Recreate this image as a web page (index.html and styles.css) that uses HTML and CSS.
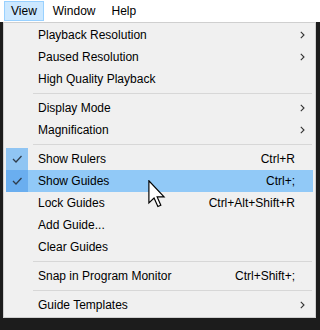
FILE: index.html
```html
<!DOCTYPE html>
<html>
<head>
<meta charset="utf-8">
<link rel="stylesheet" href="styles.css">
</head>
<body>
<div class="menubar">
  <div class="mb-item active">View</div>
  <div class="mb-item">Window</div>
  <div class="mb-item">Help</div>
</div>
<div class="popup">
  <div class="row"><span class="chk"></span><span class="label">Playback Resolution</span><span class="sc"></span><span class="arr"><svg width="5" height="8" viewBox="0 0 5 8"><polyline points="0.8,0.8 4,4 0.8,7.2" fill="none" stroke="#333" stroke-width="1.1"/></svg></span></div>
  <div class="row"><span class="chk"></span><span class="label">Paused Resolution</span><span class="sc"></span><span class="arr"><svg width="5" height="8" viewBox="0 0 5 8"><polyline points="0.8,0.8 4,4 0.8,7.2" fill="none" stroke="#333" stroke-width="1.1"/></svg></span></div>
  <div class="row"><span class="chk"></span><span class="label">High Quality Playback</span><span class="sc"></span><span class="arr"></span></div>
  <div class="sep"></div>
  <div class="row"><span class="chk"></span><span class="label">Display Mode</span><span class="sc"></span><span class="arr"><svg width="5" height="8" viewBox="0 0 5 8"><polyline points="0.8,0.8 4,4 0.8,7.2" fill="none" stroke="#333" stroke-width="1.1"/></svg></span></div>
  <div class="row"><span class="chk"></span><span class="label">Magnification</span><span class="sc"></span><span class="arr"><svg width="5" height="8" viewBox="0 0 5 8"><polyline points="0.8,0.8 4,4 0.8,7.2" fill="none" stroke="#333" stroke-width="1.1"/></svg></span></div>
  <div class="sep"></div>
  <div class="row"><span class="chk on"><svg width="22" height="22" viewBox="0 0 22 22"><polyline points="7,11 10,14 15.5,8" fill="none" stroke="#2f3d4c" stroke-width="1.3"/></svg></span><span class="label">Show Rulers</span><span class="sc">Ctrl+R</span><span class="arr"></span></div>
  <div class="row hover"><span class="chk on"><svg width="22" height="22" viewBox="0 0 22 22"><polyline points="7,11 10,14 15.5,8" fill="none" stroke="#2f3d4c" stroke-width="1.3"/></svg></span><span class="label">Show Guides</span><span class="sc">Ctrl+;</span><span class="arr"></span></div>
  <div class="row"><span class="chk"></span><span class="label">Lock Guides</span><span class="sc">Ctrl+Alt+Shift+R</span><span class="arr"></span></div>
  <div class="row"><span class="chk"></span><span class="label">Add Guide...</span><span class="sc"></span><span class="arr"></span></div>
  <div class="row"><span class="chk"></span><span class="label">Clear Guides</span><span class="sc"></span><span class="arr"></span></div>
  <div class="sep"></div>
  <div class="row"><span class="chk"></span><span class="label">Snap in Program Monitor</span><span class="sc">Ctrl+Shift+;</span><span class="arr"></span></div>
  <div class="sep"></div>
  <div class="row"><span class="chk"></span><span class="label">Guide Templates</span><span class="sc"></span><span class="arr"><svg width="5" height="8" viewBox="0 0 5 8"><polyline points="0.8,0.8 4,4 0.8,7.2" fill="none" stroke="#333" stroke-width="1.1"/></svg></span></div>
</div>
<svg class="cursor" width="18" height="28" viewBox="0 0 12 19"><path d="M0.5,0.5 L0.5,15.5 L4,12.2 L6.6,18 L8.6,17.1 L6.1,11.5 L10.8,11.5 Z" fill="#fff" stroke="#000" stroke-width="0.8" stroke-linejoin="miter"/></svg>
</body>
</html>
```
FILE: styles.css
```css
html, body {
  margin: 0;
  padding: 0;
}
body {
  background: #1c1c1c;
  width: 320px;
  height: 330px;
  overflow: hidden;
  position: relative;
  font-family: "Liberation Sans", Arial, sans-serif;
  font-size: 12px;
  color: #000;
}
.menubar {
  height: 22px;
  box-sizing: border-box;
  background: #fff;
  display: flex;
  padding: 1px 0 1px 4px;
}
.mb-item {
  height: 20px;
  line-height: 18px;
  padding: 0 6px;
  box-sizing: border-box;
  border: 1px solid transparent;
  margin-right: 2px;
}
.mb-item.active {
  background: #cce8ff;
  border-color: #99d1ff;
}
.popup {
  margin-left: 3px;
  width: 313px;
  height: 296px;
  box-sizing: border-box;
  background: #f0f0f0;
  border: 1px solid #cfcfcf;
  padding: 1px 2px;
}
.row {
  display: grid;
  grid-template-columns: 22px 1fr auto 18px;
  height: 22px;
  align-items: center;
}
.row.hover {
  background: #91c9f7;
}
.chk {
  width: 22px;
  height: 22px;
  display: block;
}
.chk svg {
  display: block;
}
.chk.on {
  background: #90c5f3;
}
.row.hover .chk.on {
  background: #6aaeef;
}
.label {
  padding-left: 10px;
  white-space: nowrap;
}
.sc {
  white-space: nowrap;
}
.arr {
  padding-left: 5px;
  display: flex;
  align-items: center;
  height: 22px;
}
.sep {
  height: 1px;
  background: #d7d7d7;
  margin: 3px 1px 3px 27px;
}
.cursor {
  position: absolute;
  left: 148px;
  top: 180px;
}
```
